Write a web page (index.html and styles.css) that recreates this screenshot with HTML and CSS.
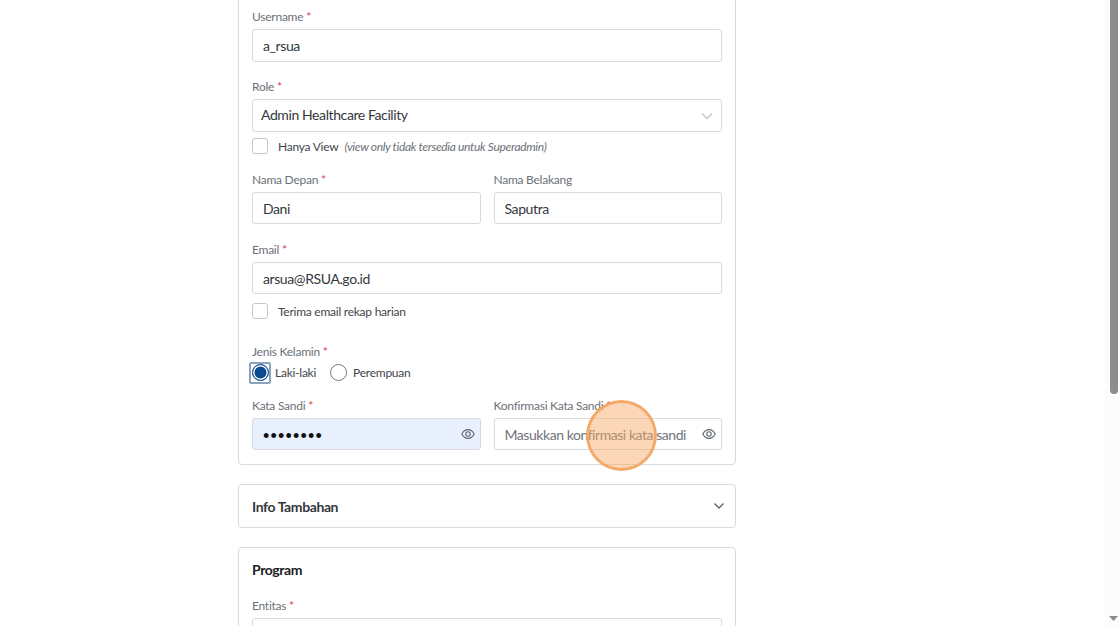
FILE: index.html
```html
<!DOCTYPE html>
<html>
<head>
<meta name="viewport" content="width=device-width, initial-scale=1.0" charset="UTF-8">
<title>Edit User</title>
<link rel="stylesheet" href="styles.css">
</head>
<body>
<div class="page">

	<div class="card card_main">
		<div class="field field_username">
			<div class="label">Username <span class="req">*</span></div>
			<div class="input">a_rsua</div>
		</div>

		<div class="field field_role">
			<div class="label">Role <span class="req">*</span></div>
			<div class="input select">
				<span>Admin Healthcare Facility</span>
				<svg class="select_arrow" width="12" height="8" viewBox="0 0 12 8"><path d="M1 1.5l5 5 5-5" fill="none" stroke="#c4c7cc" stroke-width="1.5"/></svg>
			</div>
			<div class="check_row">
				<span class="checkbox"></span>
				<span class="check_text">Hanya View</span>
				<span class="check_note">(view only tidak tersedia untuk Superadmin)</span>
			</div>
		</div>

		<div class="two_col field_name">
			<div class="field">
				<div class="label">Nama Depan <span class="req">*</span></div>
				<div class="input">Dani</div>
			</div>
			<div class="field">
				<div class="label">Nama Belakang</div>
				<div class="input">Saputra</div>
			</div>
		</div>

		<div class="field field_email">
			<div class="label">Email <span class="req">*</span></div>
			<div class="input">arsua@RSUA.go.id</div>
			<div class="check_row">
				<span class="checkbox"></span>
				<span class="check_text">Terima email rekap harian</span>
			</div>
		</div>

		<div class="field field_gender">
			<div class="label">Jenis Kelamin <span class="req">*</span></div>
			<div class="radio_row">
				<span class="radio_focus"><span class="radio radio_on"></span></span>
				<span class="radio_text">Laki-laki</span>
				<span class="radio radio_second"></span>
				<span class="radio_text">Perempuan</span>
			</div>
		</div>

		<div class="two_col field_pass">
			<div class="field">
				<div class="label">Kata Sandi <span class="req">*</span></div>
				<div class="input input_filled">
					<span class="dots">&#8226;&#8226;&#8226;&#8226;&#8226;&#8226;&#8226;&#8226;</span>
					<svg class="eye" width="14" height="12" viewBox="0 0 14 12"><path d="M.8 6C2.2 3.2 4.4 1.6 7 1.6s4.800 1.600 6.200 4.400C11.800 8.800 9.600 10.400 7 10.400S2.200 8.800.8 6z" fill="none" stroke="#5f6670" stroke-width="1.100"/><circle cx="7" cy="6" r="2.200" fill="none" stroke="#5f6670" stroke-width="1.100"/></svg>
				</div>
			</div>
			<div class="field">
				<div class="label">Konfirmasi Kata Sandi <span class="req">*</span></div>
				<div class="input input_empty">
					<span class="placeholder">Masukkan konfirmasi kata sandi</span>
					<svg class="eye" width="14" height="12" viewBox="0 0 14 12"><path d="M.8 6C2.2 3.2 4.4 1.600 7 1.600s4.800 1.600 6.200 4.400C11.800 8.800 9.600 10.400 7 10.400S2.200 8.800.8 6z" fill="none" stroke="#5f6670" stroke-width="1.100"/><circle cx="7" cy="6" r="2.200" fill="none" stroke="#5f6670" stroke-width="1.100"/></svg>
				</div>
			</div>
		</div>
	</div>

	<div class="card card_info">
		<span class="info_title">Info Tambahan</span>
		<svg width="12" height="8" viewBox="0 0 12 8" class="info_arrow"><path d="M1.500 1.500l4.500 4.500 4.500-4.500" fill="none" stroke="#5b6068" stroke-width="1.300"/></svg>
	</div>

	<div class="card card_program">
		<div class="program_title">Program</div>
		<div class="field">
			<div class="label">Entitas <span class="req">*</span></div>
			<div class="input"></div>
		</div>
	</div>

</div>

<div class="click_mark"></div>

<div class="scrollbar">
	<div class="scroll_thumb"></div>
	<svg class="scroll_down" width="9" height="5" viewBox="0 0 9 5"><path d="M0 0h9L4.500 5z" fill="#8a8a8a"/></svg>
</div>
</body>
</html>
```

FILE: styles.css
```css
html, body {
  margin: 0;
  height: 626px;
  overflow: hidden;
  background-color: white;
}

body {
  font-family: "Lato", "Liberation Sans", sans-serif;
  color: #3c4046;
}

.page {
  width: 498px;
  margin-left: 238px;
}

.card {
  box-sizing: border-box;
  background-color: white;
  border: 1px solid #d9dadc;
  border-radius: 4px;
  padding: 0 13px;
}

.card_main {
  margin-top: -20px;
  height: 485px;
  padding-top: 29px;
}

.card_info {
  margin-top: 19px;
  height: 44px;
  display: flex;
  align-items: center;
  justify-content: space-between;
}

.card_program {
  margin-top: 19px;
  height: 120px;
  padding-top: 13px;
}

.info_title {
  font-size: 14px;
  font-weight: 700;
  letter-spacing: -0.4px;
  color: #33373c;
}

.info_arrow {
  margin-right: -3px;
}

.program_title {
  font-size: 14px;
  font-weight: 700;
  letter-spacing: -0.4px;
  line-height: 18px;
  color: #1d2024;
  margin-bottom: 20px;
}

.label {
  font-size: 12px;
  letter-spacing: -0.25px;
  line-height: 14px;
  color: #6d7178;
  margin-bottom: 5px;
}

.req {
  color: #d9434e;
}

.input {
  box-sizing: border-box;
  height: 33px;
  border: 1px solid #d9dadc;
  border-radius: 3px;
  padding: 0 10px;
  font-size: 14px;
  letter-spacing: -0.4px;
  line-height: 32px;
  color: #33373c;
  display: flex;
  align-items: center;
  justify-content: space-between;
}

.field_role {
  margin-top: 18px;
}

.select {
  padding: 0 8px 2px;
}

.select_arrow {
  margin-right: 0;
  position: relative;
  top: 1px;
}

.check_row {
  display: flex;
  align-items: center;
  height: 16px;
  margin-top: 6px;
  font-size: 12px;
  letter-spacing: -0.25px;
}

.checkbox {
  box-sizing: border-box;
  width: 16px;
  height: 16px;
  border: 1px solid #c4c6c9;
  border-radius: 3px;
  margin-right: 10px;
}

.check_text {
  color: #42464c;
}

.check_note {
  margin-left: 6px;
  font-style: italic;
  letter-spacing: -0.33px;
  color: #6d7178;
}

.two_col {
  display: grid;
  grid-template-columns: 1fr 1fr;
  gap: 13px;
}

.two_col .input {
  height: 32px;
  padding-top: 2px;
}

.field_name {
  margin-top: 19px;
}

.field_email {
  margin-top: 19px;
}

.field_email .input {
  height: 32px;
  padding-top: 2px;
}

.field_email .check_row {
  margin-top: 9px;
}

.field_gender {
  margin-top: 26px;
}

.field_gender .label {
  margin-bottom: 2px;
}

.radio_row {
  display: flex;
  align-items: center;
  height: 23px;
  font-size: 12px;
  letter-spacing: -0.25px;
  color: #42464c;
}

.radio {
  box-sizing: border-box;
  display: block;
  width: 17px;
  height: 17px;
  border: 1px solid #73777d;
  border-radius: 50%;
  flex-shrink: 0;
}

.radio_on {
  border: 1px solid #0b4a8f;
  background-color: #0b4a8f;
  box-shadow: inset 0 0 0 1.500px white;
}

.radio_focus {
  box-sizing: border-box;
  display: flex;
  align-items: center;
  justify-content: center;
  width: 22px;
  height: 22px;
  margin-left: -3px;
  border: 2px solid #8aa4bb;
  border-radius: 2px;
}

.radio_text {
  margin-left: 4px;
}

.radio_second {
  margin-left: 14px;
  margin-right: 2px;
}

.field_pass {
  margin-top: 15px;
}

.input_filled {
  background-color: #e8f0fe;
}

.dots {
  font-family: "Liberation Sans", sans-serif;
  font-size: 18px;
  color: #111;
  letter-spacing: 1.2px;
  position: relative;
  top: 1px;
}

.placeholder {
  color: #70747a;
  white-space: nowrap;
  letter-spacing: -0.45px;
}

.eye {
  flex-shrink: 0;
  margin-right: -5px;
  position: relative;
  top: -1px;
}

.click_mark {
  position: absolute;
  left: 586px;
  top: 400px;
  box-sizing: border-box;
  width: 71px;
  height: 71px;
  border: 3px solid rgba(243, 165, 96, 0.9);
  border-radius: 50%;
  background-color: rgba(246, 170, 105, 0.48);
}

.scrollbar {
  position: absolute;
  right: 0;
  top: 0;
  width: 15px;
  height: 626px;
  background-color: #fcfcfc;
}

.scroll_thumb {
  width: 8px;
  height: 394px;
  margin-left: 5px;
  background-color: #8c8c8c;
  border-radius: 0 0 4px 4px;
}

.scroll_down {
  position: absolute;
  left: 4px;
  bottom: 5px;
}
```
